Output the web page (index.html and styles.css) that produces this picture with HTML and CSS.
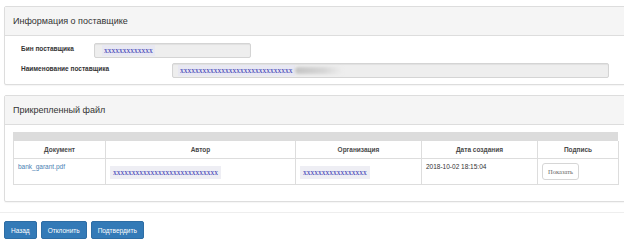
FILE: index.html
```html
<!DOCTYPE html>
<html>
    <head>
        <meta charset="utf-8">
        <title>Поставщик</title>
        <link rel="stylesheet" href="styles.css">
    </head>
    <body>
        <div class="page">
            <div class="panel">
                <div class="panel-heading">
                    <h3 class="panel-title">Информация о поставщике</h3>
                </div>
                <div class="panel-body supplier">
                    <div class="form-row">
                        <label class="lbl lbl-bin">Бин поставщика</label>
                        <div class="field field-bin"><span class="masked">xxxxxxxxxxxxx</span></div>
                    </div>
                    <div class="form-row">
                        <label class="lbl lbl-name">Наименование поставщика</label>
                        <div class="field field-name"><span class="masked">xxxxxxxxxxxxxxxxxxxxxxxxxxxxxx</span><span class="smudge"></span></div>
                    </div>
                </div>
            </div>

            <div class="panel files">
                <div class="panel-heading">
                    <h3 class="panel-title">Прикрепленный файл</h3>
                </div>
                <div class="panel-body">
                    <div class="table-bar"></div>
                    <table class="file-table" cellspacing="0">
                        <colgroup>
                            <col style="width: 92px">
                            <col style="width: 190px">
                            <col style="width: 126px">
                            <col style="width: 116px">
                            <col style="width: 81px">
                        </colgroup>
                        <thead>
                            <tr>
                                <th>Документ</th>
                                <th>Автор</th>
                                <th>Организация</th>
                                <th>Дата создания</th>
                                <th>Подпись</th>
                            </tr>
                        </thead>
                        <tbody>
                            <tr>
                                <td><a href="#" class="doc-link">bank_garant.pdf</a></td>
                                <td><span class="masked masked-cell">xxxxxxxxxxxxxxxxxxxxxxxxxxxx</span></td>
                                <td><span class="masked masked-cell">xxxxxxxxxxxxxxxxx</span></td>
                                <td class="date">2018-10-02 18:15:04</td>
                                <td class="sign"><button class="btn-show">Показать</button></td>
                            </tr>
                        </tbody>
                    </table>
                </div>
            </div>
        </div>

        <hr class="divider">

        <div class="actions">
            <button class="btn">Назад</button>
            <button class="btn">Отклонить</button>
            <button class="btn">Подтвердить</button>
        </div>
    </body>
</html>
```

FILE: styles.css
```css
body{
    margin: 0;
    background: #ffffff;
    color: #333333;
    font-family: "Liberation Sans", Arial, sans-serif;
    overflow-x: hidden;
}

.page{
    padding: 6px 0 0 4px;
    width: 622px;
}

.panel{
    border: 1px solid #dddddd;
    border-radius: 2px;
    background: #ffffff;
    margin-bottom: 10px;
    box-shadow: 0 1px 1px rgba(0, 0, 0, 0.04);
}

.panel-heading{
    height: 28px;
    display: flex;
    align-items: center;
    padding: 0 8px;
    background: #f5f5f5;
    border-bottom: 1px solid #dddddd;
}

.panel-title{
    margin: 0;
    font-size: 9px;
    font-weight: normal;
    color: #333333;
}

.panel-body{
    padding: 7px 8px;
}

.supplier{
    display: flex;
    flex-direction: column;
    gap: 5px;
    padding-bottom: 6px;
}

.form-row{
    display: flex;
    align-items: center;
    padding-left: 8px;
}

.lbl{
    font-size: 6.5px;
    font-weight: bold;
    color: #333333;
    margin-top: -5px;
}

.lbl-bin{
    width: 73px;
}

.lbl-name{
    width: 151px;
}

.field{
    height: 13px;
    display: flex;
    align-items: center;
    background: #eeeeee;
    border: 1px solid #d4d4d4;
    border-radius: 2px;
    box-shadow: inset 0 1px 1px rgba(0, 0, 0, 0.06);
}

.field-bin{
    width: 148px;
    padding-left: 7px;
}

.field-name{
    width: 430px;
    padding-left: 5px;
}

.masked{
    font-family: "Liberation Serif", "Times New Roman", serif;
    font-size: 7.5px;
    color: #2b2bb0;
    background: #e8e8f2;
    padding: 1px 2px;
}

.smudge{
    display: inline-block;
    width: 48px;
    height: 7px;
    border-radius: 4px;
    background: linear-gradient(to right, #c4c4c4, #d6d6d6 60%, #eeeeee);
    filter: blur(1.5px);
}

.files .panel-body{
    padding-top: 7px;
    padding-bottom: 16px;
}

.table-bar{
    height: 9px;
    background: #dcdcdc;
    width: 605px;
}

.file-table{
    width: 605px;
    table-layout: fixed;
    border-collapse: collapse;
}

.file-table th, .file-table td{
    border: 1px solid #dddddd;
    font-size: 6.5px;
}

.file-table th{
    height: 17px;
    padding: 0 4px;
    text-align: center;
    font-weight: bold;
    color: #4a4a4a;
    border-top: none;
}

.file-table td{
    height: 21px;
    padding: 4px 4px 0 4px;
    vertical-align: top;
    color: #333333;
}

.doc-link{
    color: #4a7fb3;
    text-decoration: none;
}

.masked-cell{
    display: inline-block;
    margin-top: 3px;
    padding: 2px 3px;
    background: #eeeef4;
}

.btn-show{
    height: 17px;
    padding: 0 5px;
    background: #ffffff;
    border: 1px solid #d6d6d6;
    border-radius: 3px;
    font-family: "Liberation Serif", "Times New Roman", serif;
    font-size: 6.5px;
    color: #666666;
}

.divider{
    margin: 0 0 8px 0;
    border: none;
    border-top: 1px solid #eeeeee;
}

.actions{
    display: flex;
    gap: 4px;
    padding-left: 4px;
}

.btn{
    height: 18px;
    padding: 0 6px;
    background: #337ab7;
    border: 1px solid #2e6da4;
    border-radius: 2px;
    color: #ffffff;
    font-family: "Liberation Sans", Arial, sans-serif;
    font-size: 6.5px;
}
```
